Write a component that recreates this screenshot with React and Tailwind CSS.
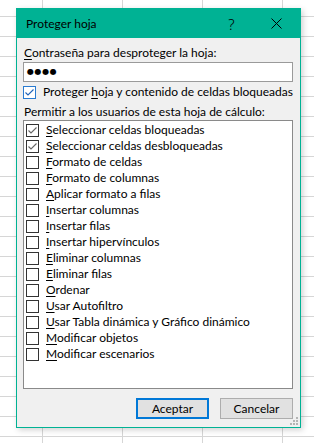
const permisos = [
  ['Seleccionar celdas bloqueadas', true],
  ['Seleccionar celdas desbloqueadas', true],
  ['Formato de celdas', false],
  ['Formato de columnas', false],
  ['Aplicar formato a filas', false],
  ['Insertar columnas', false],
  ['Insertar filas', false],
  ['Insertar hipervínculos', false],
  ['Eliminar columnas', false],
  ['Eliminar filas', false],
  ['Ordenar', false],
  ['Usar Autofiltro', false],
  ['Usar Tabla dinámica y Gráfico dinámico', false],
  ['Modificar objetos', false],
  ['Modificar escenarios', false],
]

// underline the access key letter like Windows does
function Accel({ text, at = 0 }) {
  return (
    <>
      {text.slice(0, at)}
      <u className="underline decoration-1 underline-offset-[2px]">{text[at]}</u>
      {text.slice(at + 1)}
    </>
  )
}

function Box({ checked, blue }) {
  return (
    <span
      className={
        blue
          ? 'flex h-[13px] w-[13px] shrink-0 items-center justify-center border border-[#2a7bd0] bg-white'
          : 'flex h-[13px] w-[13px] shrink-0 items-center justify-center border border-[#333333] bg-white'
      }
    >
      {checked && (
        <svg width="11" height="11" viewBox="0 0 11 11">
          <path
            d="M1.5 5.5 L4 8 L9.5 2.5"
            fill="none"
            stroke={blue ? '#1f63b8' : '#666666'}
            strokeWidth="1.1"
          />
        </svg>
      )}
    </span>
  )
}

export default function App() {
  return (
    <div className="relative h-[443px] w-[314px] overflow-hidden bg-white bg-[linear-gradient(to_right,#d6d6d6_1px,transparent_1px),linear-gradient(to_bottom,#d6d6d6_1px,transparent_1px)] bg-[size:80px_20px] bg-[position:42px_16px] font-['Lato',sans-serif] text-[12px] leading-[16px] text-black">
      <div className="absolute left-[16px] top-[8px] flex h-[420px] w-[285px] flex-col border border-[#00b294] bg-[#f0f0f0] shadow-[2px_2px_6px_rgba(0,0,0,0.18)]">
        <div className="flex h-[29px] shrink-0 items-center bg-[#00b294] pl-[9px] pr-[1px]">
          <span className="flex-1">Proteger hoja</span>
          <span className="flex h-full w-[45px] items-center justify-center font-['Noto_Sans',sans-serif] text-[15px] font-light">?</span>
          <span className="flex h-full w-[45px] items-center justify-center">
            <svg width="11" height="11" viewBox="0 0 11 11">
              <path d="M0.5 0.5 L10.5 10.5 M10.5 0.5 L0.5 10.5" stroke="#000" strokeWidth="1" />
            </svg>
          </span>
        </div>

        <div className="flex flex-1 flex-col pl-[6px] pr-[7px] pt-[7px]">
          <div className="pl-[1px]">
            <Accel text="Contraseña para desproteger la hoja:" />
          </div>
          <div className="mt-[1px] flex h-[20px] items-center border border-[#9a9a9a] bg-white pl-[3px] font-['DejaVu_Sans',sans-serif] text-[8px] tracking-[0.6px]">
            ●●●●
          </div>
          <div className="mt-[2px] flex h-[16px] items-center gap-[7px]">
            <Box checked blue />
            <span className="whitespace-nowrap">
              <Accel text="Proteger hoja y contenido de celdas bloqueadas" at={9} />
            </span>
          </div>
          <div className="mt-[4px] pl-[1px]">Permitir a los usuarios de esta hoja de cálculo:</div>
          <div className="flex h-[269px] flex-col border border-[#8a8a8a] bg-white pl-[1px] pt-[1px]">
            {permisos.map(([label, on]) => (
              <div key={label} className="flex h-[16px] items-center gap-[7px] pl-[1px]">
                <Box checked={on} />
                <span className="whitespace-nowrap">
                  <Accel text={label} />
                </span>
              </div>
            ))}
          </div>

          <div className="mt-[9px] flex justify-end gap-[11px]">
            <button className="flex h-[21px] w-[73px] items-center justify-center border-2 border-[#0078d7] bg-[#e1e1e1]">
              Aceptar
            </button>
            <button className="flex h-[21px] w-[73px] items-center justify-center border border-[#adadad] bg-[#e1e1e1]">
              Cancelar
            </button>
          </div>
        </div>

        <svg className="absolute bottom-[1px] right-[1px]" width="9" height="9" viewBox="0 0 9 9" fill="#b4b4b4">
          <rect x="6" y="0" width="2" height="2" />
          <rect x="3" y="3" width="2" height="2" />
          <rect x="6" y="3" width="2" height="2" />
          <rect x="0" y="6" width="2" height="2" />
          <rect x="3" y="6" width="2" height="2" />
          <rect x="6" y="6" width="2" height="2" />
        </svg>
      </div>
    </div>
  )
}
